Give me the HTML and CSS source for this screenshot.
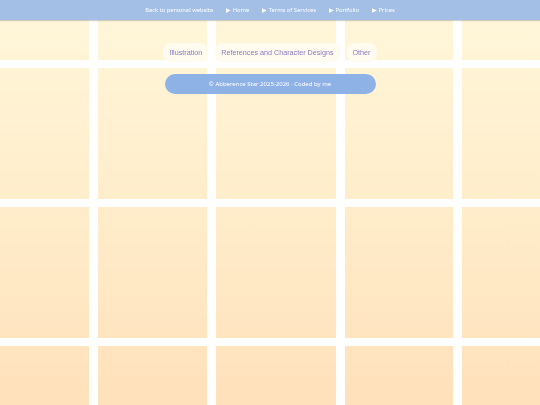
FILE: index.html
```html
<!DOCTYPE html>
<html lang="en">
<head>
    <meta charset="UTF-8">
    <meta name="viewport" content="width=device-width, initial-scale=1.0">
    <title>Gallery</title>
    <link rel="stylesheet" href="styles.css">
</head>
<body>

    <!-- tile wall behind the page -->
    <div class="tiles">
        <div class="tile"></div><div class="tile"></div><div class="tile"></div><div class="tile"></div><div class="tile"></div>
        <div class="tile"></div><div class="tile"></div><div class="tile"></div><div class="tile"></div><div class="tile"></div>
        <div class="tile"></div><div class="tile"></div><div class="tile"></div><div class="tile"></div><div class="tile"></div>
        <div class="tile"></div><div class="tile"></div><div class="tile"></div><div class="tile"></div><div class="tile"></div>
    </div>

    <nav class="topbar">
        <a href="#">Back to personal website</a>
        <a href="#">▶ Home</a>
        <a href="#">▶ Terms of Services</a>
        <a href="#">▶ Portfolio</a>
        <a href="#">▶ Prices</a>
    </nav>

    <main class="content">
        <div class="tabs">
            <button class="tab">Illustration</button>
            <button class="tab">References and Character Designs</button>
            <button class="tab">Other</button>
        </div>

        <footer class="credits">© Abberence Star 2025-2026 · Coded by me</footer>
    </main>

</body>
</html>
```

FILE: styles.css
```css
body {
    margin: 0;
    padding: 0;
    background: #fff;
    font-family: 'Liberation Sans', Arial, sans-serif;
    height: 100vh;
    overflow: hidden;
}

.tiles {
    position: fixed;
    top: -71px;
    left: 0;
    right: 0;
    z-index: -1;
    display: grid;
    grid-template-columns: 89px 109px 120px 108px 1fr;
    grid-auto-rows: 131px;
    gap: 8px 9px;
}

.tile {
    background: linear-gradient(to bottom, #fff7db 0%, #ffeecc 45%, #ffe1bb 100%) fixed;
}

.topbar {
    height: 20px;
    background-color: #a3bfe6;
    box-shadow: 0 1px 1px rgba(120, 120, 140, 0.35);
    display: flex;
    justify-content: center;
    align-items: center;
    gap: 13px;
}

.topbar a {
    color: #fff;
    text-decoration: none;
    font-family: 'Noto Sans', sans-serif;
    font-size: 5.8px;
}

.content {
    display: flex;
    flex-direction: column;
    align-items: center;
}

.tabs {
    display: flex;
    gap: 7px;
    margin-top: 23px;
}

.tab {
    background-color: #fffbee;
    color: #8a7cc4;
    border: none;
    border-radius: 8px;
    height: 19px;
    padding: 0 6px;
    font-family: 'Liberation Sans', Arial, sans-serif;
    font-size: 7.2px;
}

.credits {
    margin-top: 12px;
    width: 211px;
    height: 20px;
    border-radius: 10px;
    background-color: #8fb2e6;
    color: #fff;
    font-family: 'Noto Sans', sans-serif;
    font-size: 6px;
    display: flex;
    justify-content: center;
    align-items: center;
}
```
